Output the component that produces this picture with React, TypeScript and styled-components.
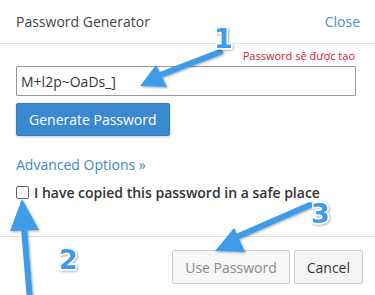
import React from 'react';
import styled, {createGlobalStyle} from "styled-components";

const GlobalStyle = createGlobalStyle`
  html, body {
    margin: 0;
    padding: 0;
    background: #fff;
  }
  body {
    font-family: "Open Sans", "Liberation Sans", sans-serif;
  }
`

function Annotations() {
    const blue = '#3d9be9';
    return (
        <Overlay width="375" height="295" viewBox="0 0 375 295">
            <defs>
                <filter id="shadow" x="-30%" y="-30%" width="160%" height="160%">
                    <feDropShadow dx="1" dy="1" stdDeviation="1" floodColor="#000" floodOpacity="0.35"/>
                </filter>
            </defs>
            <g filter="url(#shadow)">
                {/* arrow 1 */}
                <line x1="220" y1="52" x2="155" y2="77" stroke={blue} strokeWidth="6" strokeLinecap="round"/>
                <polygon points="140,86 156,65 167,87" fill={blue}/>
                {/* arrow 2 */}
                <line x1="30" y1="300" x2="24" y2="228" stroke={blue} strokeWidth="6" strokeLinecap="round"/>
                <polygon points="22,199 10,231 39,230" fill={blue}/>
                {/* arrow 3 */}
                <line x1="310" y1="205" x2="234" y2="238" stroke={blue} strokeWidth="6" strokeLinecap="round"/>
                <polygon points="215,251 234,228 245,252" fill={blue}/>
            </g>
            <g filter="url(#shadow)">
                <Num x="214" y="48">1</Num>
                <Num x="59" y="269">2</Num>
                <Num x="311" y="223">3</Num>
            </g>
        </Overlay>
    );
}

export default function App() {
    return (
        <Page>
            <GlobalStyle/>
            <Header>
                <Title>Password Generator</Title>
                <HeaderLink>Close</HeaderLink>
            </Header>
            <Body>
                <Hint>Password sẽ được tạo</Hint>
                <PasswordInput readOnly value="M+l2p~OaDs_]"/>
                <PrimaryButton>Generate Password</PrimaryButton>
                <AdvancedLink>Advanced Options »</AdvancedLink>
                <CheckRow>
                    <Box/>
                    <CheckLabel>I have copied this password in a safe place</CheckLabel>
                </CheckRow>
            </Body>
            <Footer>
                <Button disabled>Use Password</Button>
                <Button>Cancel</Button>
            </Footer>
            <Annotations/>
        </Page>
    );
}

const Page = styled.div`
  position: relative;
  width: 375px;
  height: 295px;
  overflow: hidden;
  background: #fff;
  color: #333;
`

const Header = styled.div`
  height: 44px;
  padding: 0 15px 0 16px;
  display: flex;
  align-items: center;
  justify-content: space-between;
  border-bottom: 1px solid #e3e3e3;
  box-sizing: border-box;
`

const Title = styled.div`
  font-size: 14px;
  color: #444;
`

const HeaderLink = styled.a`
  font-size: 14px;
  color: #4d90c9;
`

const Body = styled.div`
  padding: 4px 19px 0 16px;
  display: flex;
  flex-direction: column;
  align-items: flex-start;
  height: 193px;
  box-sizing: border-box;
  border-bottom: 1px solid #e3e3e3;
`

const Hint = styled.div`
  align-self: flex-end;
  font-size: 11px;
  line-height: 16px;
  color: #d0212a;
  margin-right: 1px;
`

const PasswordInput = styled.input`
  box-sizing: border-box;
  width: 100%;
  height: 30px;
  margin-top: 2px;
  padding: 0 4px;
  border: 1px solid #999;
  border-radius: 1px;
  font-family: inherit;
  font-size: 14px;
  color: #333;
  outline: none;
`

const PrimaryButton = styled.button`
  margin-top: 7px;
  height: 33px;
  padding: 0 12px;
  border: 1px solid #2f7dc2;
  border-radius: 2px;
  background: #3a89cf;
  color: #fff;
  font-family: inherit;
  font-size: 14px;
  box-shadow: 0 1px 3px rgba(0, 0, 0, 0.2);
`

const AdvancedLink = styled.a`
  margin-top: 19px;
  font-size: 14px;
  line-height: 20px;
  color: #3d87c6;
`

const CheckRow = styled.label`
  margin-top: 8px;
  display: flex;
  align-items: center;
  gap: 5px;
`

const Box = styled.span`
  width: 11px;
  height: 11px;
  border: 1px solid #666;
  border-radius: 2px;
  background: #fff;
`

const CheckLabel = styled.span`
  font-size: 14px;
  font-weight: 600;
  color: #333;
`

const Footer = styled.div`
  display: flex;
  justify-content: flex-end;
  gap: 4px;
  padding: 13px 12px 0 0;
`

const Button = styled.button`
  height: 34px;
  padding: 0 12px;
  border: 1px solid #ccc;
  border-radius: 2px;
  background: #f4f4f4;
  font-family: inherit;
  font-size: 14px;
  color: #333;

  &:disabled {
    color: #8a8a8a;
    background: #f7f7f7;
  }
`

const Overlay = styled.svg`
  position: absolute;
  left: 0;
  top: 0;
  pointer-events: none;
`

const Num = styled.text`
  font-family: "DejaVu Sans", sans-serif;
  font-weight: 700;
  font-size: 27px;
  fill: #3d9be9;
  stroke: #fff;
  stroke-width: 3px;
  paint-order: stroke;
  stroke-linejoin: round;
`
